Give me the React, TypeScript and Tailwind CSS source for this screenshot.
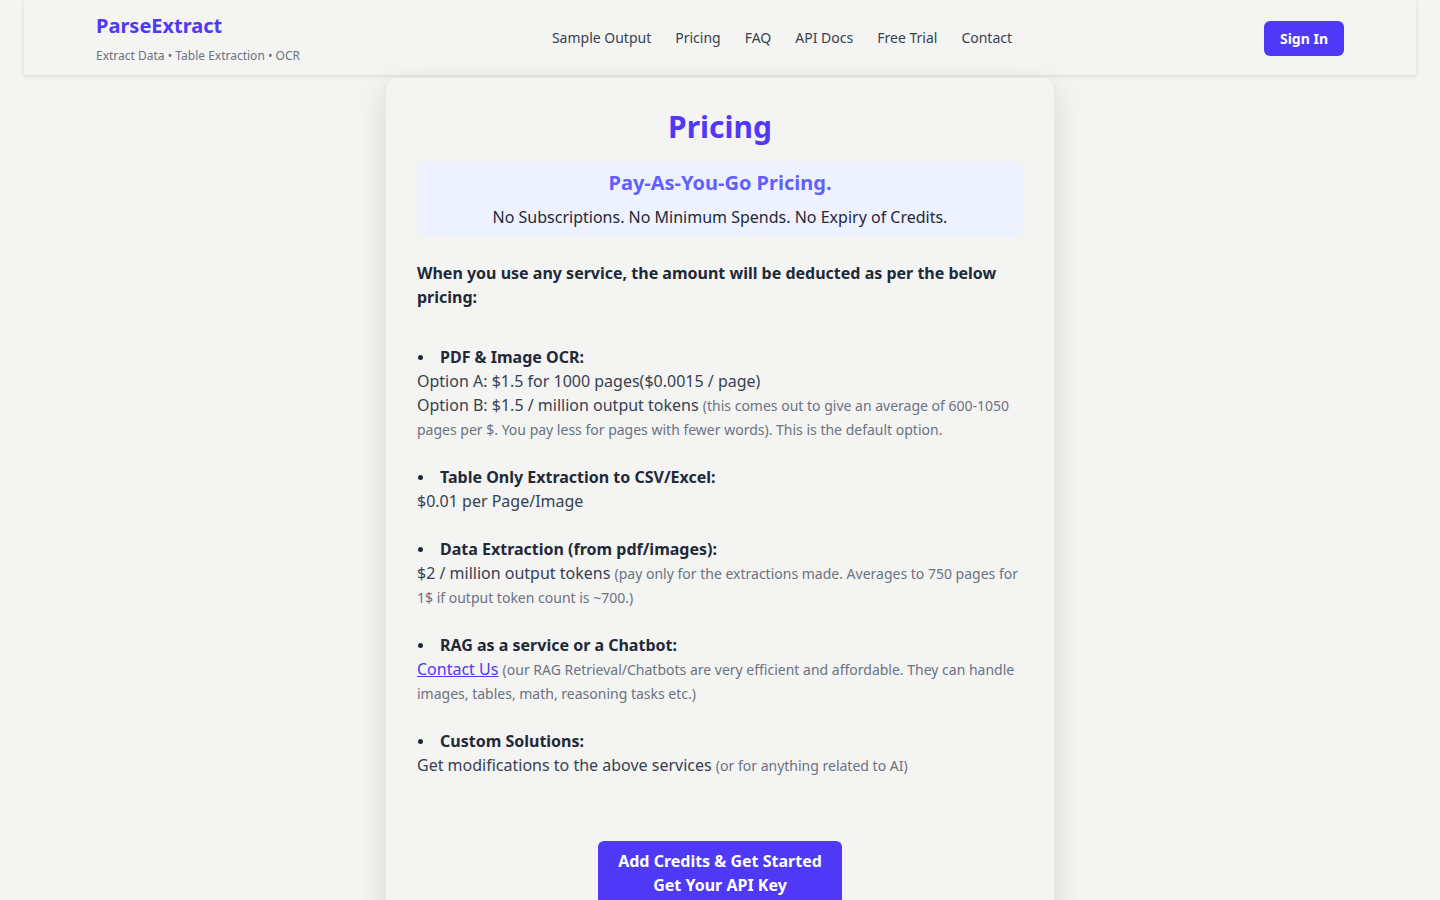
import React from "react";

const font = { fontFamily: '"Noto Sans", "Open Sans", sans-serif' };

function Bullet({ children }: { children: React.ReactNode }) {
  return (
    <div className="flex items-center font-bold text-[#1f2937]">
      <span className="ml-[1px] mr-[17px] inline-block h-[5px] w-[5px] rounded-full bg-[#1f2937]" />
      {children}
    </div>
  );
}

function Note({ children }: { children: React.ReactNode }) {
  return <span className="text-[14px] leading-[20px] text-[#6b7280]">{children}</span>;
}

export default function App() {
  return (
    <div className="min-h-screen bg-[#f4f4f3] text-[#1f2937]" style={font}>
      <header className="mx-6 flex h-[75px] items-center justify-between bg-[#f4f4f3] px-[72px] shadow-[0_1px_4px_rgba(0,0,0,0.12)]">
        <div className="flex flex-col">
          <span className="text-[20px] font-bold leading-[28px] text-[#4f39f6]">ParseExtract</span>
          <span className="mt-[8px] text-[12px] leading-[16px] text-[#6b7280]">Extract Data • Table Extraction • OCR</span>
        </div>
        <nav className="flex items-center gap-6 text-[14px] text-[#374151]">
          <a>Sample Output</a>
          <a>Pricing</a>
          <a>FAQ</a>
          <a>API Docs</a>
          <a>Free Trial</a>
          <a>Contact</a>
        </nav>
        <button className="mt-[2px] h-[35px] rounded-md bg-[#4f39f6] px-4 text-[14px] font-bold text-white">Sign In</button>
      </header>

      <main className="flex justify-center pt-[2px]">
        <div className="w-[670px] rounded-xl border border-[#e8e8e6] bg-[#f4f4f3] px-[31px] pt-[27px] pb-10 shadow-[0_10px_30px_rgba(0,0,0,0.12)]">
          <h1 className="text-center text-[30px] font-bold leading-[44px] text-[#4f39f6]">Pricing</h1>
          <div className="mt-[12px] rounded-lg bg-[#eef2ff] px-4 pt-[8px] pb-[8px] text-center">
            <p className="text-[20px] font-bold leading-[28px] text-[#615fff]">Pay-As-You-Go Pricing.</p>
            <p className="mt-[8px] text-[16px] leading-[24px] text-[#1f2937]">No Subscriptions. No Minimum Spends. No Expiry of Credits.</p>
          </div>

          <p className="mt-[24px] text-[16px] font-bold leading-[24px] text-[#1f2937]">
            When you use any service, the amount will be deducted as per the below pricing:
          </p>

          <ul className="mt-[36px] flex flex-col gap-[24px] text-[16px] leading-[24px] text-[#374151]">
            <li>
              <Bullet>PDF &amp; Image OCR:</Bullet>
              <div>Option A: $1.5 for 1000 pages($0.0015 / page)</div>
              <div>
                Option B: $1.5 / million output tokens{" "}
                <Note>
                  (this comes out to give an average of 600-1050 pages per $. You pay less for pages with fewer words). This is the default option.
                </Note>
              </div>
            </li>
            <li>
              <Bullet>Table Only Extraction to CSV/Excel:</Bullet>
              <div>$0.01 per Page/Image</div>
            </li>
            <li>
              <Bullet>Data Extraction (from pdf/images):</Bullet>
              <div>
                $2 / million output tokens{" "}
                <Note>(pay only for the extractions made. Averages to 750 pages for 1$ if output token count is ~700.)</Note>
              </div>
            </li>
            <li>
              <Bullet>RAG as a service or a Chatbot:</Bullet>
              <div>
                <a className="text-[#4f39f6] underline">Contact Us</a>{" "}
                <Note>
                  (our RAG Retrieval/Chatbots are very efficient and affordable. They can handle images, tables, math, reasoning tasks etc.)
                </Note>
              </div>
            </li>
            <li>
              <Bullet>Custom Solutions:</Bullet>
              <div>
                Get modifications to the above services <Note>(or for anything related to AI)</Note>
              </div>
            </li>
          </ul>

          <div className="mt-[64px] flex justify-center">
            <button className="rounded-md bg-[#4f39f6] px-5 py-[8px] text-[16px] font-bold leading-[24px] text-white">
              Add Credits &amp; Get Started
              <br />
              Get Your API Key
            </button>
          </div>
        </div>
      </main>
    </div>
  );
}
